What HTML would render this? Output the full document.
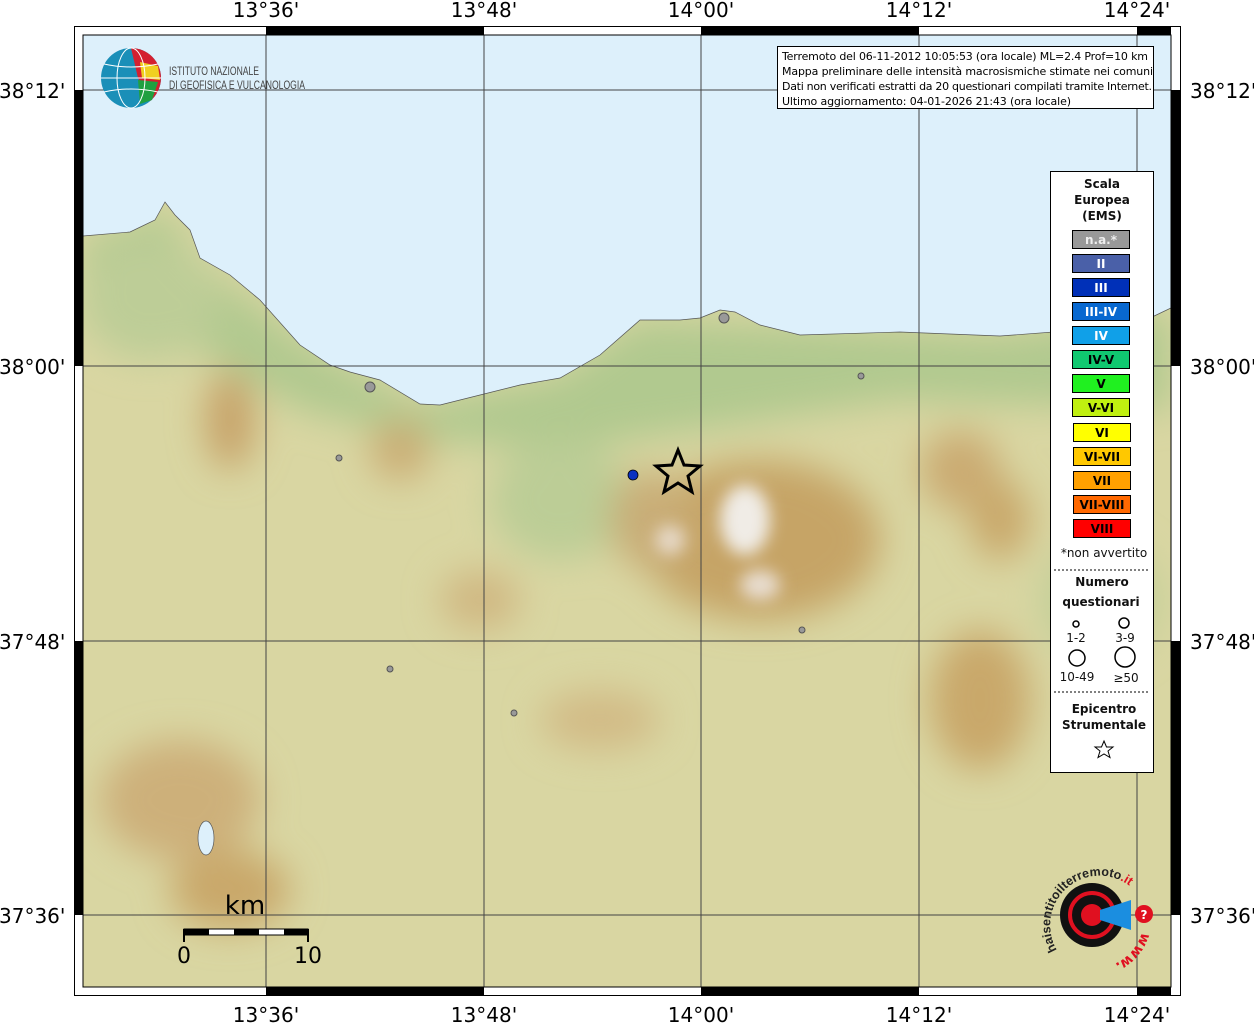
<!DOCTYPE html>
<html><head><meta charset="utf-8"><style>
body{margin:0;background:#fff;width:1254px;height:1024px;overflow:hidden;font-family:"DejaVu Sans","Liberation Sans",sans-serif}
svg{position:absolute;left:0;top:0}
</style></head><body>
<svg width="1254" height="1024" viewBox="0 0 1254 1024" xmlns="http://www.w3.org/2000/svg">
<defs>
<filter id="b" x="-50%" y="-50%" width="200%" height="200%"><feGaussianBlur stdDeviation="18"/></filter>
<filter id="b2" x="-50%" y="-50%" width="200%" height="200%"><feGaussianBlur stdDeviation="8"/></filter>
<clipPath id="m"><rect x="83" y="35" width="1088" height="952"/></clipPath>
</defs>
<g clip-path="url(#m)">
<rect x="83" y="35" width="1088" height="952" fill="#d9d6a2"/>
<g filter="url(#b)">
<path d="M83 240 L165 210 L200 260 L300 340 L420 405 L560 375 L640 320 L760 325 L1000 335 L1171 310 L1171 410 L900 400 L700 430 L560 450 L420 440 L300 410 L200 350 L83 320Z" fill="#b1c98f"/>
<ellipse cx="560" cy="500" rx="70" ry="60" fill="#bccd96"/>
<ellipse cx="150" cy="300" rx="70" ry="60" fill="#bdcd97"/>
<ellipse cx="760" cy="540" rx="120" ry="80" fill="#c6a466"/>
<ellipse cx="650" cy="520" rx="40" ry="50" fill="#c9ad77"/>
<ellipse cx="230" cy="420" rx="25" ry="50" fill="#c7a369"/>
<ellipse cx="400" cy="450" rx="30" ry="30" fill="#cbad74"/>
<ellipse cx="980" cy="700" rx="50" ry="70" fill="#c9a86b"/>
<ellipse cx="960" cy="470" rx="40" ry="40" fill="#cbab72"/>
<ellipse cx="1000" cy="520" rx="30" ry="40" fill="#c9a86b"/>
<ellipse cx="180" cy="800" rx="80" ry="60" fill="#cdb07a"/>
<ellipse cx="230" cy="890" rx="60" ry="40" fill="#c9a86b"/>
<ellipse cx="480" cy="600" rx="40" ry="30" fill="#d0b882"/>
<ellipse cx="600" cy="720" rx="60" ry="30" fill="#d2bb86"/>
<ellipse cx="1100" cy="600" rx="60" ry="60" fill="#c2cf98"/>
</g>
<g filter="url(#b2)">
<ellipse cx="745" cy="520" rx="25" ry="35" fill="#f0ece6"/>
<ellipse cx="760" cy="585" rx="20" ry="15" fill="#e8ddd0"/>
<ellipse cx="670" cy="540" rx="15" ry="15" fill="#e6d8c6"/>
</g>
<path d="M83 35 L1171 35 L1171 308 L1150 318 L1120 325 L1080 330 L1000 336 L900 332 L800 335 L760 325 L735 312 L720 310 L700 318 L680 320 L640 320 L600 355 L560 378 L520 385 L480 395 L440 405 L420 404 L380 380 L350 372 L330 365 L300 345 L260 300 L230 275 L200 258 L190 230 L175 215 L165 202 L155 220 L130 232 L83 236 Z" fill="#ddf0fb" stroke="#555" stroke-width="0.7"/>
<ellipse cx="206" cy="838" rx="8" ry="17" fill="#ddf0fb" stroke="#555" stroke-width="0.7"/>
</g>
<g stroke="#444" stroke-width="1">
<line x1="266" y1="35" x2="266" y2="987"/><line x1="484" y1="35" x2="484" y2="987"/><line x1="701" y1="35" x2="701" y2="987"/><line x1="919" y1="35" x2="919" y2="987"/><line x1="1137" y1="35" x2="1137" y2="987"/>
<line x1="83" y1="90" x2="1171" y2="90"/><line x1="83" y1="366" x2="1171" y2="366"/><line x1="83" y1="641" x2="1171" y2="641"/><line x1="83" y1="915" x2="1171" y2="915"/>
</g>
<rect x="74.5" y="26.5" width="1106" height="969" fill="none" stroke="#000"/>
<rect x="83" y="35" width="1088" height="952" fill="none" stroke="#000"/>
<g fill="#000">
<rect x="266" y="26" width="218" height="9"/><rect x="701" y="26" width="218" height="9"/><rect x="1137" y="26" width="34" height="9"/>
<rect x="266" y="987" width="218" height="9"/><rect x="701" y="987" width="218" height="9"/><rect x="1137" y="987" width="34" height="9"/>
<rect x="74" y="90" width="9" height="276"/><rect x="74" y="641" width="9" height="274"/>
<rect x="1171" y="90" width="10" height="276"/><rect x="1171" y="641" width="10" height="274"/>
</g>
<g font-size="20" fill="#000" text-anchor="middle">
<text x="266" y="17">13°36'</text><text x="484" y="17">13°48'</text><text x="701" y="17">14°00'</text><text x="919" y="17">14°12'</text><text x="1137" y="17">14°24'</text>
<text x="266" y="1022">13°36'</text><text x="484" y="1022">13°48'</text><text x="701" y="1022">14°00'</text><text x="919" y="1022">14°12'</text><text x="1137" y="1022">14°24'</text>
</g>
<g font-size="20" fill="#000">
<text x="-1" y="98">38°12'</text><text x="-1" y="374">38°00'</text><text x="-1" y="649">37°48'</text><text x="-1" y="923">37°36'</text>
<text x="1190" y="98">38°12'</text><text x="1190" y="374">38°00'</text><text x="1190" y="649">37°48'</text><text x="1190" y="923">37°36'</text>
</g>
<circle cx="131" cy="78" r="30" fill="#1a8fb8"/>
<path d="M131 48 A30 30 0 0 1 161 78 A30 30 0 0 1 150 101 L138 78Z" fill="#d42030"/>
<path d="M140 62 L158 66 L160 80 L142 78Z" fill="#f0d020"/>
<path d="M138 80 L158 82 L152 100 L140 104Z" fill="#20a040"/>
<g stroke="#fff" stroke-width="1" fill="none"><ellipse cx="131" cy="78" rx="14" ry="30"/><line x1="101" y1="78" x2="161" y2="78"/><path d="M104 64 Q131 70 158 64"/><path d="M104 92 Q131 86 158 92"/></g>
<text x="169" y="75" font-size="12" fill="#444" font-family="Liberation Sans Narrow, Liberation Sans, sans-serif" textLength="90" lengthAdjust="spacingAndGlyphs">ISTITUTO NAZIONALE</text>
<text x="169" y="89" font-size="12" fill="#444" font-family="Liberation Sans Narrow, Liberation Sans, sans-serif" textLength="136" lengthAdjust="spacingAndGlyphs">DI GEOFISICA E VULCANOLOGIA</text>
<rect x="777.5" y="46.5" width="376" height="62" fill="#fff" stroke="#000"/>
<g font-size="11" fill="#000"><text x="782" y="60" textLength="366">Terremoto del 06-11-2012 10:05:53 (ora locale) ML=2.4 Prof=10 km</text><text x="782" y="75" textLength="371">Mappa preliminare delle intensità macrosismiche stimate nei comuni</text><text x="782" y="90" textLength="370">Dati non verificati estratti da 20 questionari compilati tramite Internet.</text><text x="782" y="105" textLength="289">Ultimo aggiornamento: 04-01-2026 21:43 (ora locale)</text></g>
<rect x="1050.5" y="171.5" width="103" height="601" fill="#fff" stroke="#000"/>
<g font-size="12" font-weight="bold" text-anchor="middle" fill="#111"><text x="1102" y="188">Scala</text><text x="1102" y="204">Europea</text><text x="1102" y="220">(EMS)</text></g>
<g stroke="#000" stroke-width="1">
<rect x="1072.5" y="230.5" width="57" height="18" fill="#999"/>
<rect x="1072.5" y="254.5" width="57" height="18" fill="#4a60a8"/>
<rect x="1072.5" y="278.5" width="57" height="18" fill="#0030b8"/>
<rect x="1072.5" y="302.5" width="57" height="18" fill="#0868d0"/>
<rect x="1072.5" y="326.5" width="57" height="18" fill="#10a0e8"/>
<rect x="1072.5" y="350.5" width="57" height="18" fill="#10c870"/>
<rect x="1072.5" y="374.5" width="57" height="18" fill="#20f020"/>
<rect x="1072.5" y="398.5" width="57" height="18" fill="#c0f010"/>
<rect x="1073.5" y="423.5" width="57" height="18" fill="#ffff00"/>
<rect x="1073.5" y="447.5" width="57" height="18" fill="#ffc800"/>
<rect x="1073.5" y="471.5" width="57" height="18" fill="#ffa000"/>
<rect x="1073.5" y="495.5" width="57" height="18" fill="#ff6800"/>
<rect x="1073.5" y="519.5" width="57" height="18" fill="#ff0000"/>
</g>
<g font-size="12" font-weight="bold" text-anchor="middle">
<text x="1101" y="244" fill="#eee">n.a.*</text><text x="1101" y="268" fill="#fff">II</text><text x="1101" y="292" fill="#fff">III</text><text x="1101" y="316" fill="#fff">III-IV</text><text x="1101" y="340" fill="#fff">IV</text>
<text x="1101" y="364" fill="#000">IV-V</text><text x="1101" y="388" fill="#000">V</text><text x="1101" y="412" fill="#000">V-VI</text><text x="1102" y="437" fill="#000">VI</text><text x="1102" y="461" fill="#000">VI-VII</text><text x="1102" y="485" fill="#000">VII</text><text x="1102" y="509" fill="#000">VII-VIII</text><text x="1102" y="533" fill="#000">VIII</text>
</g>
<text x="1104" y="557" font-size="12" text-anchor="middle" fill="#111">*non avvertito</text>
<line x1="1054" y1="570" x2="1150" y2="570" stroke="#000" stroke-dasharray="2,2"/>
<g font-size="12" font-weight="bold" text-anchor="middle" fill="#111"><text x="1102" y="586">Numero</text><text x="1101" y="606">questionari</text></g>
<g fill="none" stroke="#000" stroke-width="1.5"><circle cx="1076" cy="624" r="3"/><circle cx="1124" cy="623" r="5"/><circle cx="1077" cy="658" r="8"/><circle cx="1125" cy="657" r="10"/></g>
<g font-size="12" text-anchor="middle" fill="#111"><text x="1076" y="642">1-2</text><text x="1125" y="642">3-9</text><text x="1077" y="681">10-49</text><text x="1126" y="682">≥50</text></g>
<line x1="1054" y1="692" x2="1150" y2="692" stroke="#000" stroke-dasharray="2,2"/>
<g font-size="12" font-weight="bold" text-anchor="middle" fill="#111"><text x="1104" y="713">Epicentro</text><text x="1104" y="729">Strumentale</text></g>
<path d="M1104 741 L1106.5 747 L1113 747 L1108 751 L1110 757.5 L1104 754 L1098 757.5 L1100 751 L1095 747 L1101.5 747Z" fill="none" stroke="#000"/>
<g fill="#999" stroke="#555" stroke-width="1">
<circle cx="370" cy="387" r="5"/><circle cx="724" cy="318" r="5"/><circle cx="339" cy="458" r="3"/><circle cx="861" cy="376" r="3"/><circle cx="802" cy="630" r="3"/><circle cx="390" cy="669" r="3"/><circle cx="514" cy="713" r="3"/>
</g>
<circle cx="633" cy="475" r="5" fill="#0a30c0" stroke="#000" stroke-width="0.8"/>
<path d="M678 450 L684 465 L700 466 L688 476 L692 492 L678 483 L664 492 L668 476 L656 466 L672 465Z" fill="none" stroke="#000" stroke-width="3"/>
<text x="245" y="914" font-size="26" text-anchor="middle">km</text>
<rect x="184" y="929" width="124" height="6" fill="#fff" stroke="#000"/>
<rect x="184" y="929" width="25" height="6" fill="#000"/><rect x="234" y="929" width="25" height="6" fill="#000"/><rect x="284" y="929" width="24" height="6" fill="#000"/>
<line x1="184" y1="929" x2="184" y2="942" stroke="#000" stroke-width="2"/><line x1="308" y1="929" x2="308" y2="942" stroke="#000" stroke-width="2"/>
<text x="184" y="963" font-size="22" text-anchor="middle">0</text><text x="308" y="963" font-size="22" text-anchor="middle">10</text>
<circle cx="1092" cy="915" r="32" fill="#111"/>
<circle cx="1092" cy="915" r="22" fill="none" stroke="#e01020" stroke-width="4"/>
<circle cx="1092" cy="915" r="11" fill="#e01020"/>
<path d="M1100 910 L1131 900 L1131 930 L1100 920Z" fill="#1b8ee0"/>
<circle cx="1144" cy="914" r="9" fill="#e01020"/>
<text x="1144" y="919" font-size="12" fill="#fff" text-anchor="middle" font-weight="bold">?</text>
<path id="arc" d="M1057 950 A49 49 0 1 1 1142 900" fill="none"/>
<text font-size="12.5" font-weight="bold" fill="#222" font-family="Liberation Sans, sans-serif"><textPath href="#arc">haisentitoilterremoto<tspan fill="#e01020">.it</tspan></textPath></text>
<path id="arc2" d="M1142 932 A50 50 0 0 1 1100 968" fill="none"/>
<text font-size="14" font-weight="bold" fill="#e01020"><textPath href="#arc2">www.</textPath></text>
</svg>
</body></html>
